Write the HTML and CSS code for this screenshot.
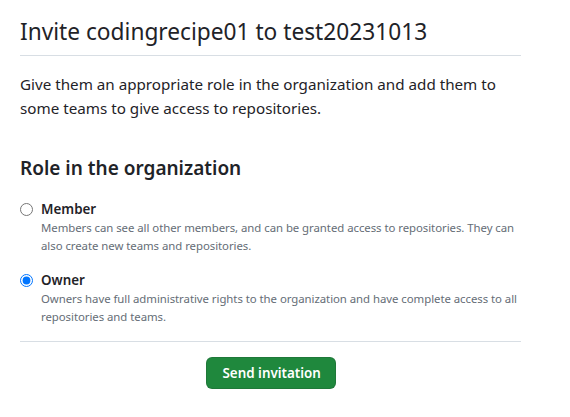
FILE: index.html
```html
<!DOCTYPE html>
<html>
<head>
<meta charset="utf-8">
<link rel="stylesheet" href="styles.css">
</head>
<body>
<div class="page">
  <h1 class="title">Invite codingrecipe01 to test20231013</h1>
  <p class="lead">Give them an appropriate role in the organization and add them to some teams to give access to repositories.</p>
  <h2 class="section">Role in the organization</h2>
  <div class="option">
    <label class="opt-label"><input type="radio" name="role" class="radio"> Member</label>
    <p class="note">Members can see all other members, and can be granted access to repositories. They can also create new teams and repositories.</p>
  </div>
  <div class="option">
    <label class="opt-label"><input type="radio" name="role" class="radio" checked> Owner</label>
    <p class="note">Owners have full administrative rights to the organization and have complete access to all repositories and teams.</p>
  </div>
  <div class="actions">
    <button class="btn">Send invitation</button>
  </div>
</div>
</body>
</html>
```
FILE: styles.css
```css
html, body {
  margin: 0;
  background: #ffffff;
}
body {
  font-family: "Noto Sans", "Open Sans", sans-serif;
  color: #1f2328;
}
.page {
  width: 501px;
  margin-left: 20px;
  padding-top: 17px;
}
.title {
  margin: 0;
  font-size: 22.7px;
  line-height: 30px;
  font-weight: 400;
  padding-bottom: 8px;
  border-bottom: 1px solid #d8dee4;
}
.lead {
  margin: 16px 0 0;
  font-size: 15.2px;
  line-height: 24px;
}
.section {
  margin: 33px 0 0;
  font-size: 19px;
  line-height: 30px;
  font-weight: 600;
}
.option {
  margin-top: 16px;
}
.opt-label {
  display: flex;
  align-items: center;
  font-size: 13.4px;
  line-height: 20px;
  font-weight: 600;
}
.radio {
  margin: 0 8px 0 0;
  width: 13px;
  height: 13px;
}
.note {
  margin: 0 0 0 21px;
  font-size: 11.4px;
  letter-spacing: -0.05px;
  line-height: 17.5px;
  color: #656d76;
}
.actions {
  margin-top: 16px;
  border-top: 1px solid #d8dee4;
  padding-top: 15px;
  display: flex;
  justify-content: center;
}
.btn {
  font-family: inherit;
  font-size: 13.4px;
  font-weight: 600;
  color: #ffffff;
  background: #1f883d;
  border: 1px solid rgba(31, 35, 40, 0.15);
  border-radius: 6px;
  height: 32px;
  padding: 0 16px;
  width: 130px;
  white-space: nowrap;
}
```
